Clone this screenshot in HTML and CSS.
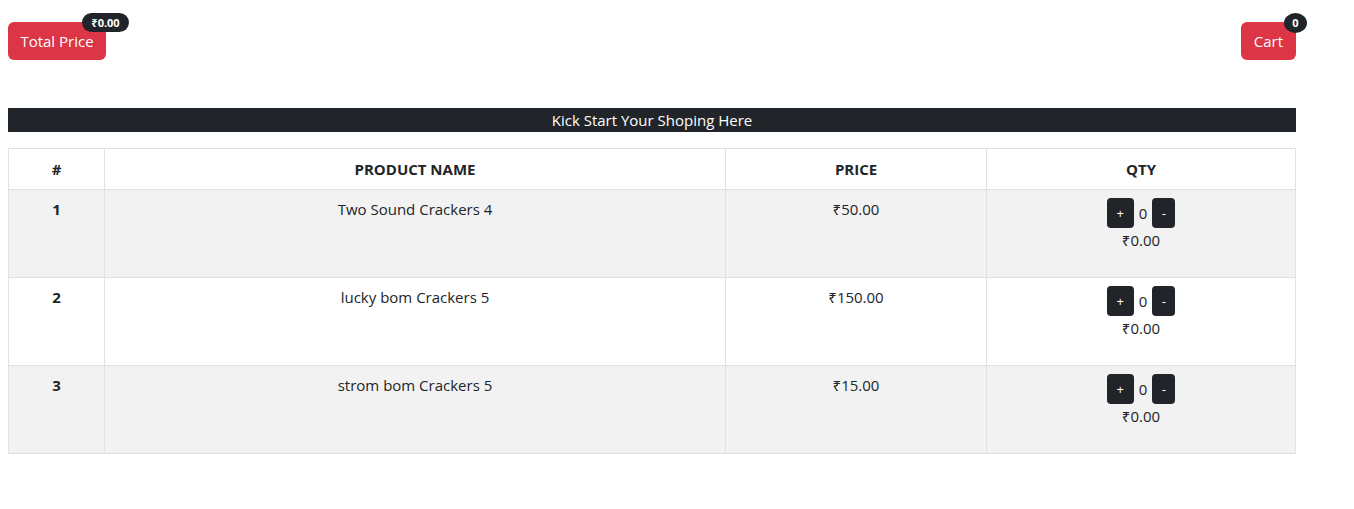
FILE: index.html
```html
<!DOCTYPE html>
<html>
<head>
<meta charset="utf-8">
<link rel="stylesheet" href="styles.css">
</head>
<body>
<div class="page">
  <div class="topbar">
    <button class="btn-red btn-total">Total Price<span class="badge badge-wide">₹0.00</span></button>
    <button class="btn-red">Cart<span class="badge badge-round">0</span></button>
  </div>
  <div class="banner">Kick Start Your Shoping Here</div>
  <table class="products">
    <colgroup>
      <col class="c1"><col class="c2"><col class="c3"><col class="c4">
    </colgroup>
    <thead>
      <tr><th>#</th><th>PRODUCT NAME</th><th>PRICE</th><th>QTY</th></tr>
    </thead>
    <tbody>
      <tr class="striped">
        <th>1</th><td>Two Sound Crackers 4</td><td>₹50.00</td>
        <td><div class="qty"><button class="btn-dark plus">+</button><span class="count">0</span><button class="btn-dark minus">-</button></div><div class="sub">₹0.00</div></td>
      </tr>
      <tr>
        <th>2</th><td>lucky bom Crackers 5</td><td>₹150.00</td>
        <td><div class="qty"><button class="btn-dark plus">+</button><span class="count">0</span><button class="btn-dark minus">-</button></div><div class="sub">₹0.00</div></td>
      </tr>
      <tr class="striped">
        <th>3</th><td>strom bom Crackers 5</td><td>₹15.00</td>
        <td><div class="qty"><button class="btn-dark plus">+</button><span class="count">0</span><button class="btn-dark minus">-</button></div><div class="sub">₹0.00</div></td>
      </tr>
    </tbody>
  </table>
</div>
</body>
</html>
```
FILE: styles.css
```css
* { box-sizing: border-box; }
body {
  margin: 0;
  font-family: "Open Sans", "Noto Sans", sans-serif;
  font-size: 16px;
  color: #212529;
  background: #fff;
}
.page {
  width: 1288px;
  margin-left: 8px;
  padding-top: 22px;
}
.topbar {
  display: flex;
  justify-content: space-between;
  align-items: flex-start;
}
.btn-red {
  position: relative;
  height: 38px;
  padding: 0 13px;
  border: none;
  border-radius: 6px;
  background: #dc3545;
  color: #fff;
  font-family: inherit;
  font-size: 15px;
  line-height: 38px;
  cursor: pointer;
}
.btn-total { width: 98px; padding: 0; }
.badge {
  position: absolute;
  top: -9px;
  height: 19px;
  background: #212529;
  color: #fff;
  font-size: 11px;
  font-weight: 700;
  line-height: 19px;
  border-radius: 10px;
  text-align: center;
}
.badge-wide {
  right: -23px;
  width: 47px;
}
.badge-round {
  right: -11px;
  width: 23px;
  height: 20px;
  line-height: 20px;
  border-radius: 50%;
}
.banner {
  margin-top: 48px;
  height: 24px;
  background: #212529;
  color: #fff;
  text-align: center;
  font-size: 15px;
  line-height: 24px;
}
.products {
  margin-top: 16px;
  width: 1287px;
  border-collapse: collapse;
  table-layout: fixed;
  font-size: 15px;
}
.c1 { width: 96px; }
.c2 { width: 621px; }
.c3 { width: 261px; }
.c4 { width: 309px; }
.products th, .products td {
  border: 1px solid #dee2e6;
  text-align: center;
  vertical-align: top;
  padding: 7px 8px 8px;
  line-height: 24px;
}
.products thead th {
  height: 41px;
  padding: 8px;
  vertical-align: middle;
  font-weight: 700;
}
.products tbody tr { height: 88px; }
.products tbody th { font-weight: 700; }
.striped { background: #f2f2f2; }
.qty {
  display: flex;
  justify-content: center;
  align-items: center;
  gap: 5px;
  margin-top: 1px;
}
.btn-dark {
  height: 30px;
  border: none;
  border-radius: 4px;
  background: #212529;
  color: #fff;
  font-family: inherit;
  font-size: 13px;
  padding: 0;
}
.plus { width: 27px; }
.minus { width: 23px; }
.count { font-size: 15px; }
.sub { line-height: 24px; }
```
